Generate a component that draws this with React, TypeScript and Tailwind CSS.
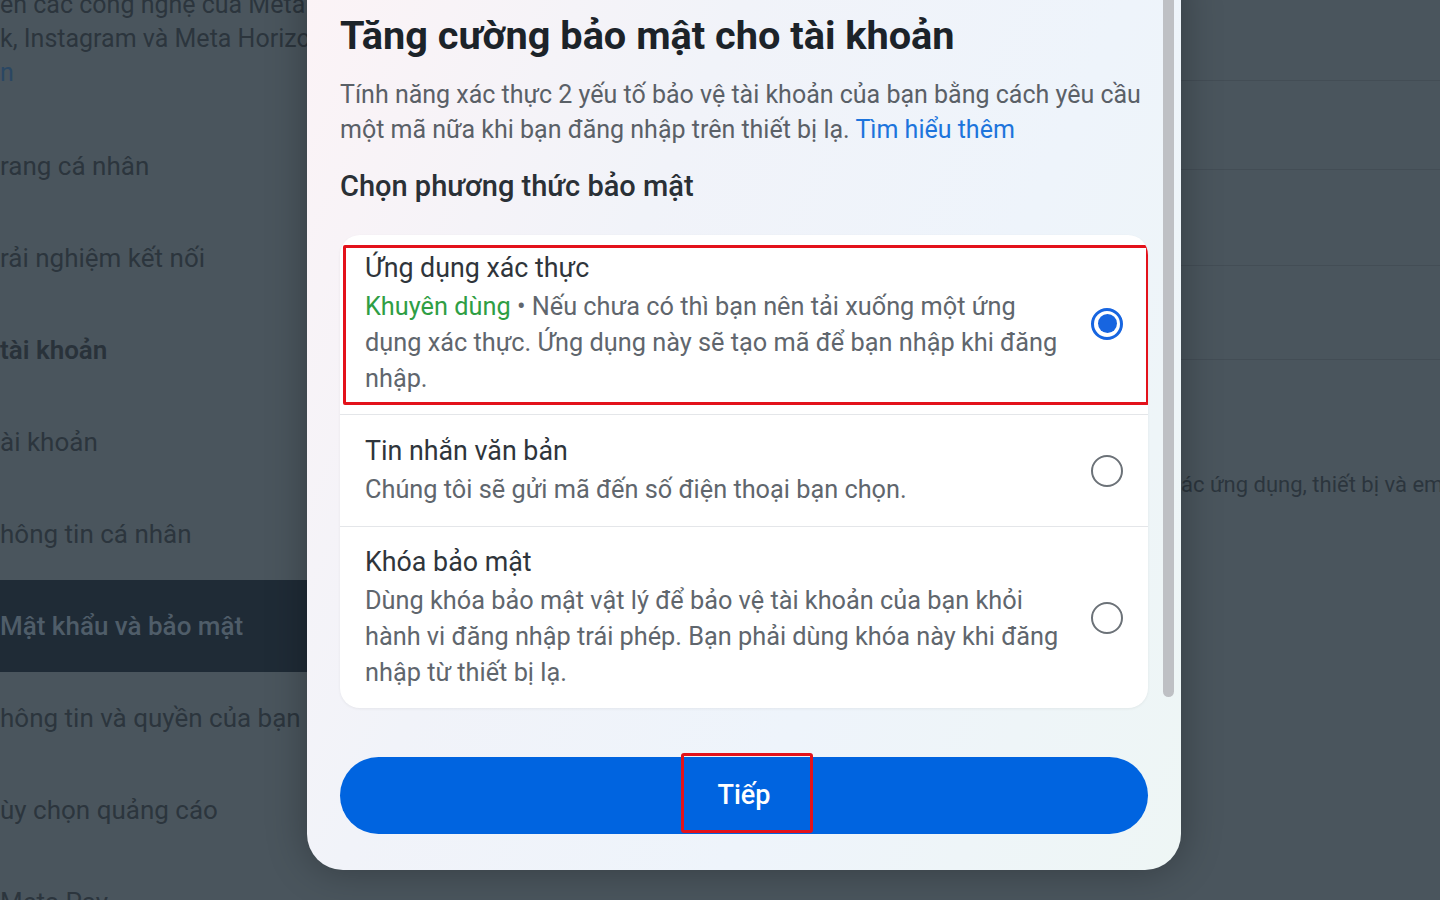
import { type ReactNode } from 'react'

const font = { fontFamily: 'Roboto, "Noto Sans", sans-serif' }

const sideItems: { label: string; bold?: boolean; active?: boolean }[] = [
  { label: 'rang cá nhân' },
  { label: 'rải nghiệm kết nối' },
  { label: 'tài khoản', bold: true },
  { label: 'ài khoản' },
  { label: 'hông tin cá nhân' },
  { label: 'Mật khẩu và bảo mật', active: true },
  { label: 'hông tin và quyền của bạn' },
  { label: 'ùy chọn quảng cáo' },
  { label: 'Meta Pay' },
]

function Radio({ checked }: { checked?: boolean }) {
  if (checked) {
    return (
      <div className="flex h-[32px] w-[32px] shrink-0 items-center justify-center rounded-full border-[3px] border-[#1765e0] bg-white">
        <div className="h-[19px] w-[19px] rounded-full bg-[#1765e0]" />
      </div>
    )
  }
  return <div className="h-[32px] w-[32px] shrink-0 rounded-full border-[2.5px] border-[#6c7278] bg-white" />
}

function Option({
  title,
  lines,
  checked,
  className,
  children,
}: {
  title: string
  lines: ReactNode[]
  checked?: boolean
  className: string
  children?: ReactNode
}) {
  return (
    <div className={`relative flex items-center justify-between pl-[25px] pr-[25px] ${className}`}>
      <div className="min-w-0">
        <p className="text-[26.8px] leading-[36px] text-[#2f353b]">{title}</p>
        <div className="mt-[3px] text-[25.3px] leading-[36px] text-[#60666d]">
          {lines.map((l, i) => (
            <p key={i} className="whitespace-nowrap">
              {l}
            </p>
          ))}
        </div>
      </div>
      <Radio checked={checked} />
      {children}
    </div>
  )
}

export default function App() {
  return (
    <div className="relative h-[900px] w-[1440px] overflow-hidden bg-[#4a555d]" style={font}>
      {/* page behind the overlay */}
      <div className="flex h-full">
        <aside className="w-[330px] shrink-0 text-[#2c353d]">
          <div className="-mt-[12px] text-[25px] leading-[34px] whitespace-nowrap">
            <p>ến các công nghệ của Meta</p>
            <p>k, Instagram và Meta Horizon</p>
            <p className="text-[#2a4763]">n</p>
          </div>
          <nav className="mt-[30px]">
            {sideItems.map((item) => (
              <div
                key={item.label}
                className={`flex h-[92px] items-center whitespace-nowrap text-[26px] ${
                  item.active
                    ? 'bg-[#1f2b36] font-medium text-[#4f5d69]'
                    : item.bold
                      ? 'font-semibold text-[#29323a]'
                      : 'text-[#2c353d]'
                }`}
              >
                {item.label}
              </div>
            ))}
          </nav>
        </aside>
        <main className="flex-1">
          <div className="ml-[851px] mt-[80px] border-t border-[#434d55]" />
          <div className="ml-[851px] mt-[88px] border-t border-[#434d55]" />
          <div className="ml-[851px] mt-[95px] border-t border-[#434d55]" />
          <div className="ml-[851px] mt-[93px] border-t border-[#434d55]" />
          <p className="ml-[851px] mt-[108px] whitespace-nowrap text-[22px] text-[#2c353d]">
            ác ứng dụng, thiết bị và email
          </p>
        </main>
      </div>

      {/* modal */}
      <div className="absolute left-[307px] top-[-40px] h-[910px] w-[874px] overflow-hidden rounded-[36px] bg-[linear-gradient(115deg,#fcf3f6_0%,#f1f3f9_35%,#eef4fb_65%,#eef6f5_100%)] shadow-[0_0_40px_rgba(0,0,0,0.3)]">
        <div className="px-[33px] pt-[52px]">
          <h1 className="text-[39.7px] font-bold leading-[48px] text-[#1c2329]">
            Tăng cường bảo mật cho tài khoản
          </h1>
          <p className="mt-[17px] text-[25px] leading-[35px] text-[#5a6067]">
            <span className="block whitespace-nowrap">
              Tính năng xác thực 2 yếu tố bảo vệ tài khoản của bạn bằng cách yêu cầu
            </span>
            <span className="block whitespace-nowrap">
              một mã nữa khi bạn đăng nhập trên thiết bị lạ.{' '}
              <span className="text-[#1d74dc]">Tìm hiểu thêm</span>
            </span>
          </p>
          <h2 className="mt-[21px] text-[29px] font-medium leading-[36px] text-[#2a3036]">
            Chọn phương thức bảo mật
          </h2>

          <div className="mt-[31px] overflow-hidden rounded-[20px] bg-white shadow-[0_1px_3px_rgba(0,0,0,0.06)]">
            <Option
              title="Ứng dụng xác thực"
              checked
              className="pt-[15px] pb-[17px]"
              lines={[
                <>
                  <span className="text-[#2f9e44]">Khuyên dùng</span> • Nếu chưa có thì bạn nên tải xuống một ứng
                </>,
                'dụng xác thực. Ứng dụng này sẽ tạo mã để bạn nhập khi đăng',
                'nhập.',
              ]}
            >
              <div className="pointer-events-none absolute bottom-[9px] left-[3px] right-[-1px] top-[10px] rounded-[2px] border-[3px] border-[#e3121b]" />
            </Option>
            <div className="h-px bg-[#e4e6e9]" />
            <Option
              title="Tin nhắn văn bản"
              className="pt-[18px] pb-[18px]"
              lines={['Chúng tôi sẽ gửi mã đến số điện thoại bạn chọn.']}
            />
            <div className="h-px bg-[#e4e6e9]" />
            <Option
              title="Khóa bảo mật"
              className="pt-[17px] pb-[17px]"
              lines={[
                'Dùng khóa bảo mật vật lý để bảo vệ tài khoản của bạn khỏi',
                'hành vi đăng nhập trái phép. Bạn phải dùng khóa này khi đăng',
                'nhập từ thiết bị lạ.',
              ]}
            />
          </div>

          <button className="relative mt-[49px] flex h-[77px] w-full items-center justify-center rounded-full bg-[#0064e0] text-[27px] font-medium text-white">
            Tiếp
            <span className="pointer-events-none absolute left-[341px] top-[-4px] h-[80px] w-[132px] rounded-[3px] border-[3px] border-[#e3121b]" />
          </button>
        </div>

        {/* scrollbar */}
        <div className="absolute right-[7px] top-0 h-[737px] w-[11px] rounded-full bg-[#bec0c4]" />
      </div>
    </div>
  )
}
